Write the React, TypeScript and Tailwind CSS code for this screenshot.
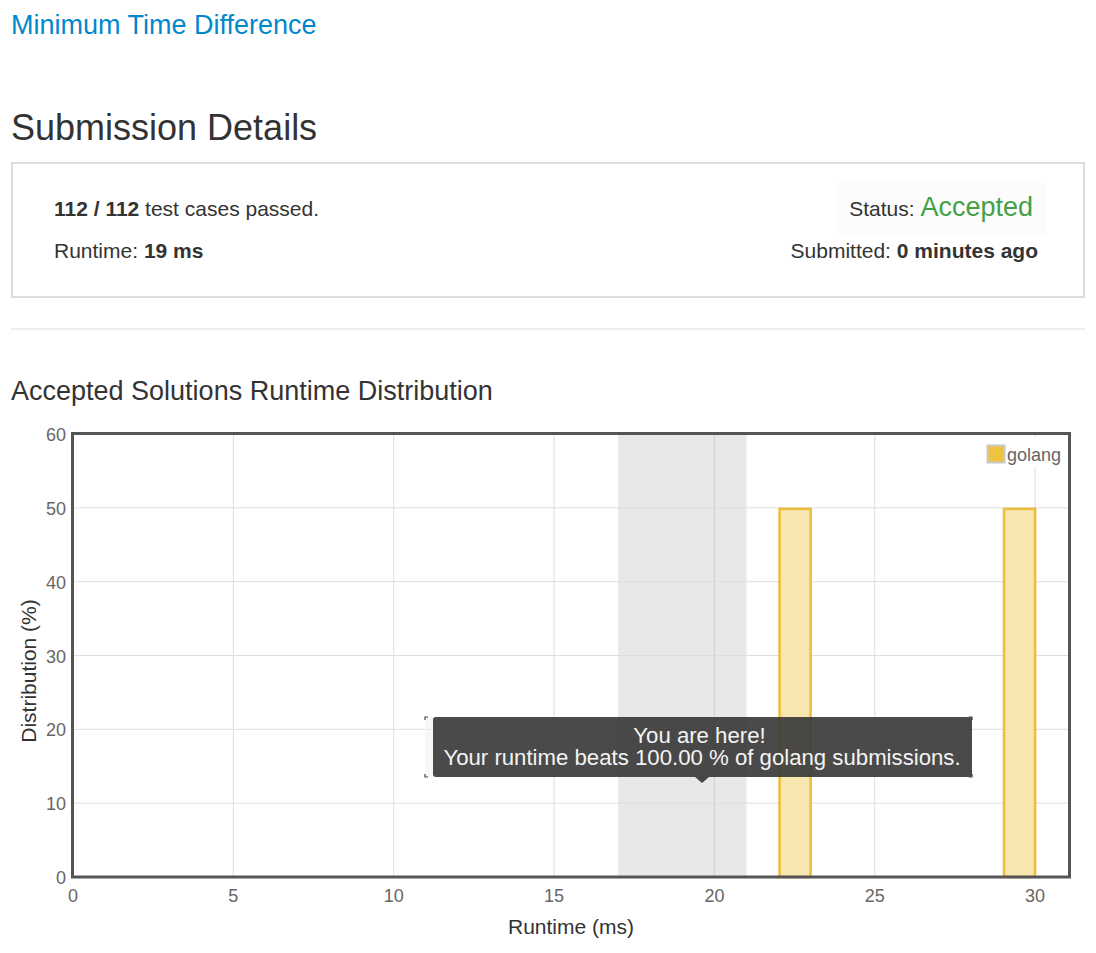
import React from "react"

const X0 = 73
const PX = 32.07
const Y0 = 877
const PY = 7.383

const x = (v: number) => X0 + v * PX
const y = (v: number) => Y0 - v * PY

const xTicks = [0, 5, 10, 15, 20, 25, 30]
const yTicks = [0, 10, 20, 30, 40, 50, 60]
const bars = [22, 29]

function RuntimeChart() {
  return (
    <svg width={1075} height={525} viewBox="11 420 1075 525" className="block">
      {/* you-are-here band */}
      <rect x={x(17)} y={433} width={x(21) - x(17)} height={Y0 - 433} fill="#e8e8e8" />

      {/* grid */}
      {xTicks.slice(1).map((t) => (
        <line key={"gx" + t} x1={x(t)} x2={x(t)} y1={433} y2={Y0} stroke={t === 20 ? "#cfcfcf" : "#dedede"} strokeWidth={1} />
      ))}
      {yTicks.slice(1, -1).map((t) => (
        <line key={"gy" + t} x1={X0} x2={1070} y1={y(t)} y2={y(t)} stroke="#dedede" strokeWidth={1} />
      ))}

      {/* bars */}
      {bars.map((b) => (
        <rect key={b} x={x(b) + 1} y={y(50) + 1} width={PX - 1} height={Y0 - y(50) - 1} fill="#f8e6b1" stroke="#ecbd3a" strokeWidth={2.5} />
      ))}

      {/* legend */}
      <rect x={984} y={437} width={78} height={30} fill="#fff" />
      <rect x={987.5} y={445.5} width={17} height={17} fill="#eec33f" stroke="#c8c8c8" strokeWidth={2} />
      <text x={1007} y={461} fontSize={18} fill="#666">golang</text>

      {/* frame */}
      <rect x={72.5} y={433.5} width={997} height={443.5} fill="none" stroke="#555" strokeWidth={3} />

      {/* tick labels */}
      {yTicks.map((t) => (
        <text key={"ly" + t} x={66} y={y(t) + 7} fontSize={18} fill="#666" textAnchor="end">
          {t}
        </text>
      ))}
      {xTicks.map((t) => (
        <text key={"lx" + t} x={x(t)} y={902} fontSize={18} fill="#666" textAnchor="middle">
          {t}
        </text>
      ))}

      {/* axis titles */}
      <text x={571} y={934} fontSize={21} fill="#333" textAnchor="middle">
        Runtime (ms)
      </text>
      <text transform="translate(36 671) rotate(-90)" fontSize={21} fill="#333" textAnchor="middle">
        Distribution (%)
      </text>

      {/* tooltip */}
      <rect x={425} y={717} width={547} height={60} fill="#f3f3f3" fillOpacity={0.7} />
      <path d="M425 720V717h3M969 717h3v3M425 774v3h3M969 777h3v-3" fill="none" stroke="#444" strokeWidth={1.2} />
      <rect x={433} y={717} width={539} height={60} rx={3} fill="#000" fillOpacity={0.7} />
      <path d="M695 777L702 783L709 777Z" fill="#000" fillOpacity={0.7} />
      <text x={699.5} y={742.5} fontSize={22.2} fill="#f4f4f4" textAnchor="middle">
        You are here!
      </text>
      <text x={702} y={765} fontSize={22.2} fill="#f4f4f4" textAnchor="middle">
        Your runtime beats 100.00 % of golang submissions.
      </text>
    </svg>
  )
}

export default function App() {
  return (
    <div className="min-h-screen bg-white px-[11px] pt-[11px] font-['Liberation_Sans',Arial,sans-serif] text-[#333]">
      <a className="block text-[27px] leading-[1.1] text-[#0088cc]">Minimum Time Difference</a>

      <h1 className="mt-[67px] text-[36px] leading-[1.1]">Submission Details</h1>

      <div className="mt-[15px] flex justify-between border-2 border-[#dddddd] pt-[24px] pb-[24px] text-[21px]">
        <div className="pl-[41px] leading-[42px]">
          <div>
            <b>112 / 112</b> test cases passed.
          </div>
          <div>
            Runtime: <b>19 ms</b>
          </div>
        </div>
        <div className="-mt-[6px] flex flex-col items-end pr-[45px]">
          <div className="-mr-[8px] flex h-[54px] items-center bg-[#fcfcfc] pl-[12px] pr-[13px] pb-[2px]">
            <div className="leading-[30px]">
              Status: <span className="text-[27px] text-[#43a047]">Accepted</span>
            </div>
          </div>
          <div className="leading-[30px]">
            Submitted: <b>0 minutes ago</b>
          </div>
        </div>
      </div>

      <hr className="mt-[30px] border-t-2 border-[#eeeeee]" />

      <h3 className="mt-[47px] text-[27px] leading-[1.1]">Accepted Solutions Runtime Distribution</h3>

      <div className="mt-[13px]">
        <RuntimeChart />
      </div>
    </div>
  )
}
